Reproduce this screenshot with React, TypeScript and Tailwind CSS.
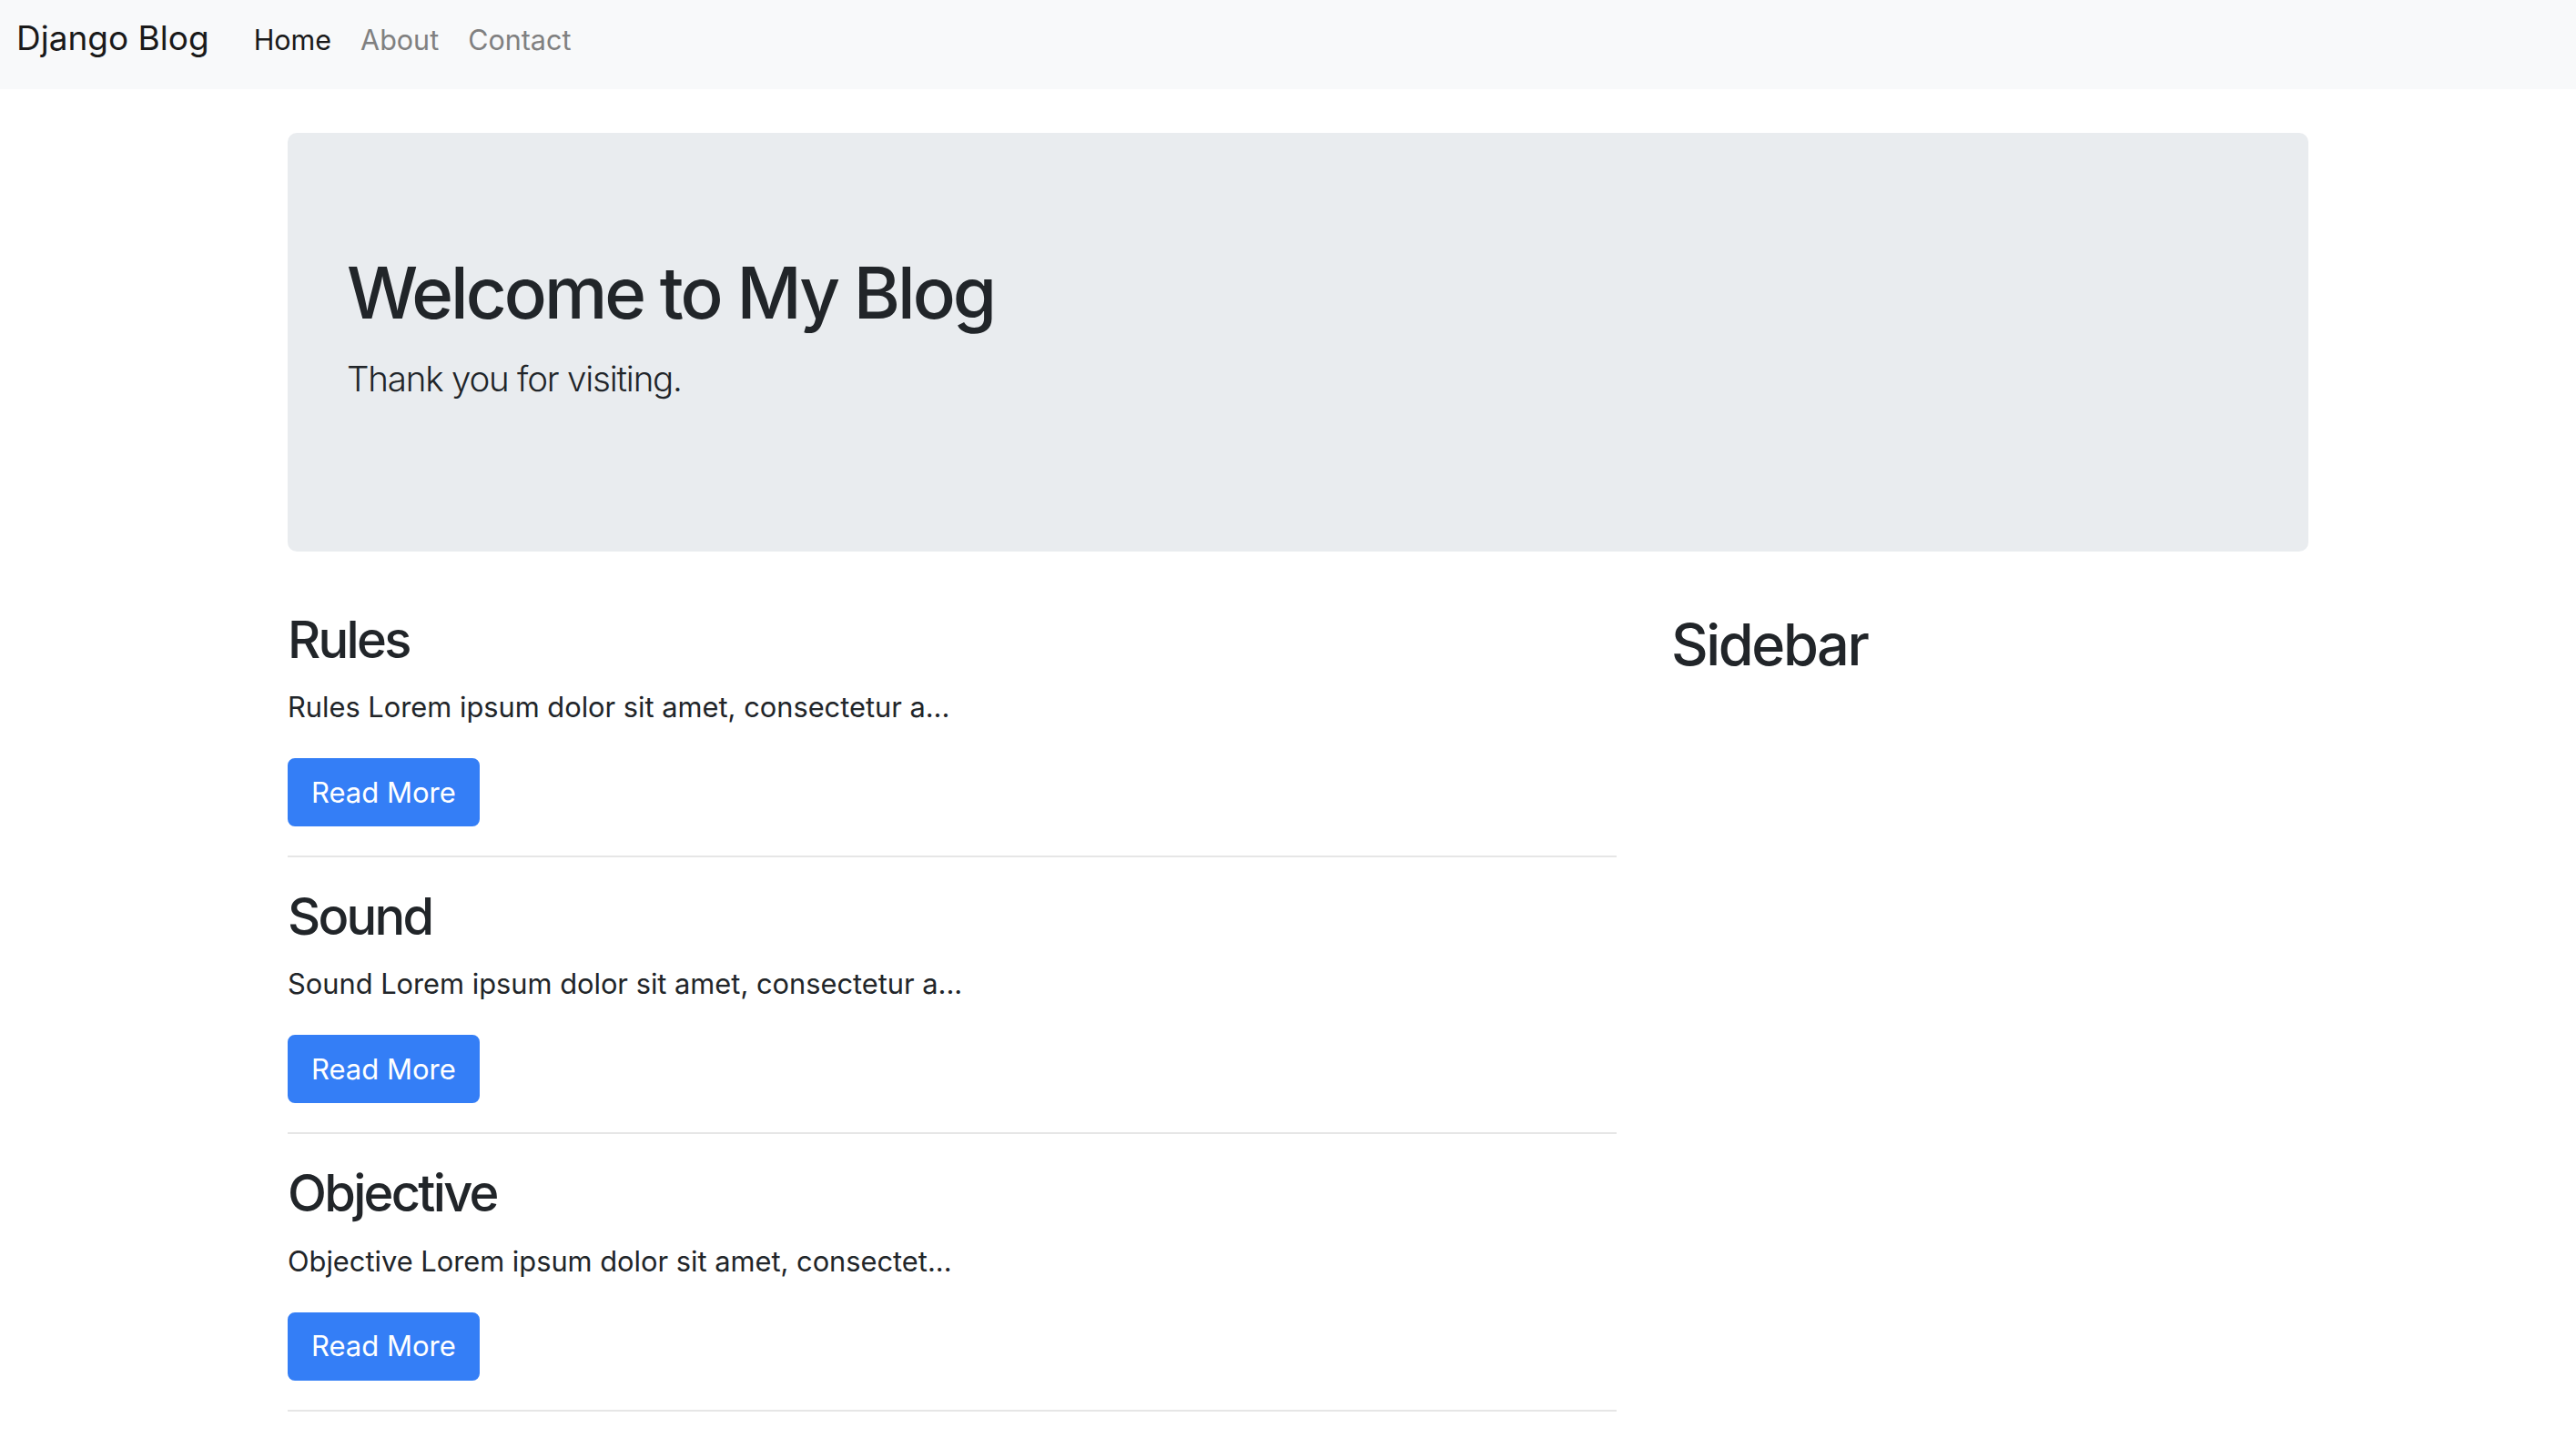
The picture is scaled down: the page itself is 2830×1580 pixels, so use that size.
import React from "react";

const posts = [
  { title: "Rules", excerpt: "Rules Lorem ipsum dolor sit amet, consectetur a..." },
  { title: "Sound", excerpt: "Sound Lorem ipsum dolor sit amet, consectetur a..." },
  { title: "Objective", excerpt: "Objective Lorem ipsum dolor sit amet, consectet..." },
];

export default function App() {
  return (
    <div className="min-h-[1580px] bg-white font-['Inter',sans-serif] text-[#212529]">
      <nav className="flex h-[98px] items-baseline bg-[#f8f9fa] pl-[18px] pt-[12px]">
        <a className="mr-[33px] text-[37px] leading-[60px] text-[#1a1a1a]">Django Blog</a>
        <a className="px-[16px] text-[30.5px] leading-[48px] text-[#1a1a1a]">Home</a>
        <a className="px-[16px] text-[30.5px] leading-[48px] text-[#808080]">About</a>
        <a className="px-[16px] text-[30.5px] leading-[48px] text-[#808080]">Contact</a>
      </nav>

      <div className="ml-[316px] w-[2220px]">
        <div className="mt-[48px] rounded-[10px] bg-[#e9ecef] px-[65px] py-[128px]">
          <h1 className="mb-[16px] text-[78px] font-medium leading-[96px] tracking-[-3px]">Welcome to My Blog</h1>
          <p className="mb-[32px] text-[38.5px] font-light leading-[60px] tracking-[-1.2px]">Thank you for visiting.</p>
        </div>

        <div className="mt-[64px] flex gap-[60px]">
          <div className="w-[1460px]">
            {posts.map((p) => (
              <div key={p.title}>
                <h3 className="mb-[16px] text-[56px] font-medium leading-[67.2px] tracking-[-2.7px]">{p.title}</h3>
                <p className="mb-[32px] text-[30.8px] leading-[48px]">{p.excerpt}</p>
                <button className="flex h-[75px] items-center rounded-[8px] border-2 border-[#347ef6] bg-[#347ef6] px-[24px] text-[31px] leading-[48px] text-white">
                  Read More
                </button>
                <div className="my-[32px] h-[2px] bg-[#e6e6e6]" />
              </div>
            ))}
          </div>
          <div className="w-[700px]">
            <h2 className="text-[63px] font-medium leading-[76.8px] tracking-[-2.4px]">Sidebar</h2>
          </div>
        </div>
      </div>
    </div>
  );
}
